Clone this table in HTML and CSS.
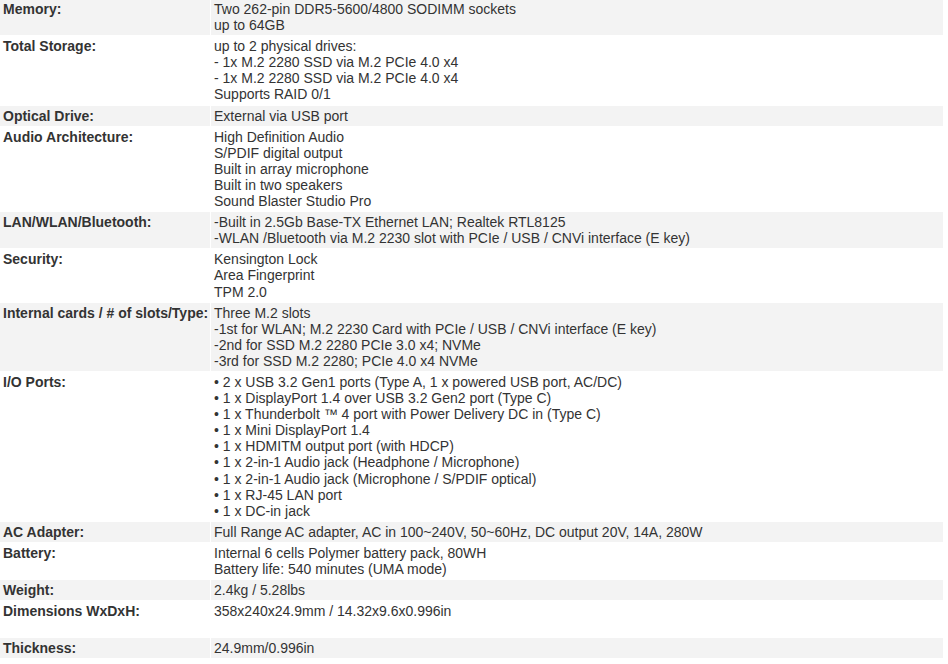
FILE: index.html
```html
<!DOCTYPE html>
<html lang="en">
<head>
  <meta charset="UTF-8">
  <meta name="viewport" content="width=device-width, initial-scale=1.0">
  <title>Specifications</title>
  <link rel="stylesheet" href="styles.css">
</head>
<body>
  <table class="spec-table">
    <colgroup>
      <col class="col-label">
      <col class="col-value">
    </colgroup>
    <tr>
      <th>Memory:</th>
      <td>Two 262-pin DDR5-5600/4800 SODIMM sockets<br>up to 64GB</td>
    </tr>
    <tr>
      <th>Total Storage:</th>
      <td>up to 2 physical drives:<br>- 1x M.2 2280 SSD via M.2 PCIe 4.0 x4<br>- 1x M.2 2280 SSD via M.2 PCIe 4.0 x4<br>Supports RAID 0/1</td>
    </tr>
    <tr>
      <th>Optical Drive:</th>
      <td>External via USB port</td>
    </tr>
    <tr>
      <th>Audio Architecture:</th>
      <td>High Definition Audio<br>S/PDIF digital output<br>Built in array microphone<br>Built in two speakers<br>Sound Blaster Studio Pro</td>
    </tr>
    <tr>
      <th>LAN/WLAN/Bluetooth:</th>
      <td>-Built in 2.5Gb Base-TX Ethernet LAN; Realtek RTL8125<br>-WLAN /Bluetooth via M.2 2230 slot with PCIe / USB / CNVi interface (E key)</td>
    </tr>
    <tr>
      <th>Security:</th>
      <td>Kensington Lock<br>Area Fingerprint<br>TPM 2.0</td>
    </tr>
    <tr>
      <th>Internal cards / # of slots/Type:</th>
      <td>Three M.2 slots<br>-1st for WLAN; M.2 2230 Card with PCIe / USB / CNVi interface (E key)<br>-2nd for SSD M.2 2280 PCIe 3.0 x4; NVMe<br>-3rd for SSD M.2 2280; PCIe 4.0 x4 NVMe</td>
    </tr>
    <tr>
      <th>I/O Ports:</th>
      <td>
        • 2 x USB 3.2 Gen1 ports (Type A, 1 x powered USB port, AC/DC)<br>
        • 1 x DisplayPort 1.4 over USB 3.2 Gen2 port (Type C)<br>
        • 1 x Thunderbolt ™ 4 port with Power Delivery DC in (Type C)<br>
        • 1 x Mini DisplayPort 1.4<br>
        • 1 x HDMITM output port (with HDCP)<br>
        • 1 x 2-in-1 Audio jack (Headphone / Microphone)<br>
        • 1 x 2-in-1 Audio jack (Microphone / S/PDIF optical)<br>
        • 1 x RJ-45 LAN port<br>
        • 1 x DC-in jack
      </td>
    </tr>
    <tr>
      <th>AC Adapter:</th>
      <td>Full Range AC adapter, AC in 100~240V, 50~60Hz, DC output 20V, 14A, 280W</td>
    </tr>
    <tr>
      <th>Battery:</th>
      <td>Internal 6 cells Polymer battery pack, 80WH<br>Battery life: 540 minutes (UMA mode)</td>
    </tr>
    <tr>
      <th>Weight:</th>
      <td>2.4kg / 5.28lbs</td>
    </tr>
    <tr>
      <th>Dimensions WxDxH:</th>
      <td>358x240x24.9mm / 14.32x9.6x0.996in<br>&nbsp;</td>
    </tr>
    <tr>
      <th>Thickness:</th>
      <td>24.9mm/0.996in</td>
    </tr>
  </table>
</body>
</html>
```

FILE: styles.css
```css
body {
  margin: 0;
  background-color: #fff;
  font-family: "Liberation Sans", Arial, sans-serif;
  font-size: 14px;
  color: #333;
}
.spec-table {
  table-layout: fixed;
  width: 945px;
  margin: -2px 0 0 -1px;
  border-collapse: separate;
  border-spacing: 1px;
}
.col-label {
  width: 210px;
}
.spec-table th,
.spec-table td {
  padding: 2px 3px;
  text-align: left;
  vertical-align: top;
  line-height: 16.1px;
}
.spec-table th {
  font-weight: bold;
  white-space: nowrap;
}
.spec-table tr:nth-child(odd) th,
.spec-table tr:nth-child(odd) td {
  background-color: #f3f3f3;
}
```
